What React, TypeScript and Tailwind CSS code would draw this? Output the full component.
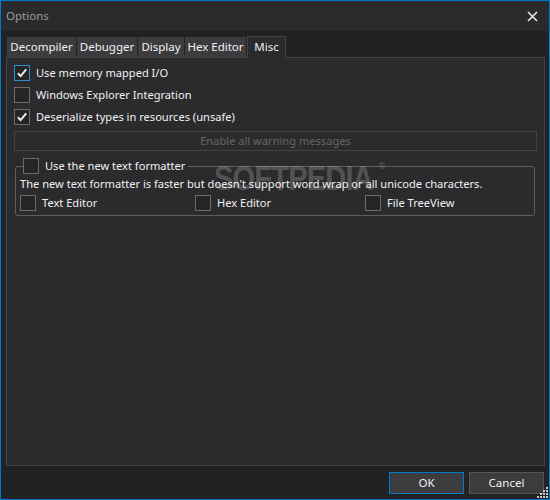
import React from "react";

function Check({ checked, focused }: { checked?: boolean; focused?: boolean }) {
  return (
    <div
      className={
        "w-[16px] h-[16px] shrink-0 border bg-[#252526] flex items-center justify-center " +
        (focused ? "border-[#2b8fd6]" : "border-[#6b6b6b]")
      }
    >
      {checked && (
        <svg width="12" height="12" viewBox="0 0 12 12">
          <path d="M1.8 6.3 L4.6 9 L10.2 2.4" fill="none" stroke="#f1f1f1" strokeWidth="1.9" />
        </svg>
      )}
    </div>
  );
}

function Row({ label, checked, focused }: { label: string; checked?: boolean; focused?: boolean }) {
  return (
    <div className="h-[22px] flex items-center gap-[6px]">
      <Check checked={checked} focused={focused} />
      <span>{label}</span>
    </div>
  );
}

export default function App() {
  const tabs = [
    { name: "Decompiler", w: "w-[69px]" },
    { name: "Debugger", w: "w-[60px]" },
    { name: "Display", w: "w-[46px]" },
    { name: "Hex Editor", w: "w-[61px]" },
  ];
  return (
    <div className="relative w-[550px] h-[500px] border border-[#007acc] bg-[#222224] flex flex-col font-['Noto_Sans',sans-serif] text-[11.1px] leading-[16px] text-[#f1f1f1] overflow-hidden">
      {/* title bar */}
      <div className="h-[30px] shrink-0 bg-[#2a2a2c] flex items-center justify-between pl-[5px] pr-[11px]">
        <span className="text-[#9a9a9a] text-[11.5px]">Options</span>
        <svg width="11" height="11" viewBox="0 0 11 11">
          <path d="M1 1 L10 10 M10 1 L1 10" stroke="#e8e8e8" strokeWidth="1.6" />
        </svg>
      </div>

      {/* tabs */}
      <div className="mt-[5px] ml-[6px] h-[21px] shrink-0 flex items-end gap-[1px] relative z-10">
        {tabs.map((t) => (
          <div
            key={t.name}
            className={t.w + " h-[20px] bg-[#3c3c3f] flex items-center justify-center text-[11.5px]"}
          >
            {t.name}
          </div>
        ))}
        <div className="w-[39px] h-[22px] -mb-[1px] bg-[#2b2b2d] border border-b-0 border-[#434346] flex items-center justify-center pb-[2px] text-[11.5px]">
          Misc
        </div>
      </div>

      {/* panel */}
      <div className="ml-[5px] mr-[4px] h-[409px] shrink-0 border border-[#434346] bg-[#2b2b2d] pl-[7px] pr-[7px] pt-[4px]">
        <Row label="Use memory mapped I/O" checked focused />
        <Row label="Windows Explorer Integration" />
        <Row label="Deserialize types in resources (unsafe)" checked />
        <div className="mt-[3px] h-[20px] border border-[#434346] flex items-center justify-center text-[#656565]">
          Enable all warning messages
        </div>

        <div className="relative mt-[15px] ml-[1px] w-[520px] h-[50px] border border-[#5e5e5e] rounded-[3px] pl-[4px] pt-[9px]">
          <div className="absolute -top-[9px] left-[7px] bg-[#2b2b2d] flex items-center gap-[6px] pr-[3px]">
            <Check />
            <span>Use the new text formatter</span>
          </div>
          <div>The new text formatter is faster but doesn't support word wrap or all unicode characters.</div>
          <div className="flex h-[22px] items-center">
            <div className="w-[175px] flex items-center gap-[6px]">
              <Check />
              <span>Text Editor</span>
            </div>
            <div className="w-[170px] flex items-center gap-[6px]">
              <Check />
              <span>Hex Editor</span>
            </div>
            <div className="flex items-center gap-[6px]">
              <Check />
              <span>File TreeView</span>
            </div>
          </div>
        </div>
      </div>

      {/* buttons */}
      <div className="mt-[6px] h-[22px] shrink-0 flex justify-end gap-[5px] pr-[5px]">
        <div className="w-[75px] h-[22px] border border-[#007acc] bg-[#3c3c3f] flex items-center justify-center text-[11.5px]">OK</div>
        <div className="w-[75px] h-[22px] border border-[#555557] bg-[#3c3c3f] flex items-center justify-center text-[11.5px]">Cancel</div>
      </div>

      {/* watermark */}
      <div className="pointer-events-none absolute left-[213px] top-[157px] flex items-start">
        <span className="font-['Liberation_Sans',sans-serif] font-bold text-[35px] leading-[40px] tracking-[-1px] text-white/20 scale-x-[0.83] origin-left inline-block">
          SOFTPEDIA
        </span>
      </div>
      <span className="pointer-events-none absolute left-[377px] top-[160px] text-[9px] leading-[10px] text-white/20">®</span>

      {/* resize grip */}
      <svg className="absolute right-0 bottom-0" width="12" height="12" viewBox="0 0 12 12">
        <g fill="#c8c8c8">
          <rect x="9" y="0" width="2" height="2" />
          <rect x="6" y="3" width="2" height="2" />
          <rect x="9" y="3" width="2" height="2" />
          <rect x="3" y="6" width="2" height="2" />
          <rect x="6" y="6" width="2" height="2" />
          <rect x="9" y="6" width="2" height="2" />
          <rect x="0" y="9" width="2" height="2" />
          <rect x="3" y="9" width="2" height="2" />
          <rect x="6" y="9" width="2" height="2" />
          <rect x="9" y="9" width="2" height="2" />
        </g>
      </svg>
    </div>
  );
}
